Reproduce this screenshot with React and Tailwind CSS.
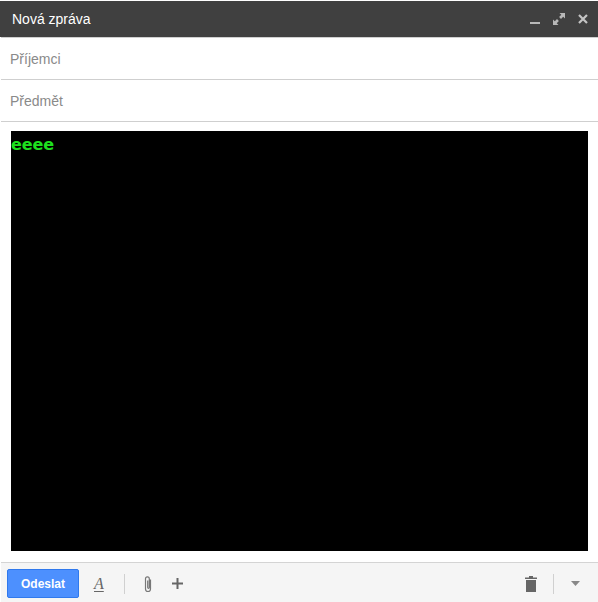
export default function App() {
  return (
    <div className="flex h-[602px] w-[598px] flex-col bg-white font-['Liberation_Sans',Arial,sans-serif]">
      <header className="mt-px flex h-[36px] shrink-0 items-center justify-between bg-[#404040] pl-3 pr-[10px]">
        <span className="text-[14px] text-white">Nová zpráva</span>
        <div className="flex items-center gap-[13px]">
          <svg width="10" height="10" viewBox="0 0 10 10" className="mt-[2px]">
            <rect x="0" y="7" width="10" height="2" fill="#b8b8b8" />
          </svg>
          <svg width="12" height="12" viewBox="0 0 12 12" fill="#b8b8b8">
            <path d="M6.500 0h5.500v5.500L10.200 3.700 8 5.900 6.100 4 8.300 1.800z" />
            <path d="M0 6.500L1.800 8.300 4 6.100 5.900 8 3.700 10.200 5.500 12H0z" />
          </svg>
          <svg width="10" height="10" viewBox="0 0 10 10" stroke="#c4c4c4" strokeWidth="2.2">
            <path d="M1 1l8 8M9 1l-8 8" />
          </svg>
        </div>
      </header>

      <div className="ml-px flex h-[43px] shrink-0 items-center border-y border-y-[#cfcfcf] pt-[2px] pl-[9px]">
        <span className="text-[14px] text-[#8a8a8a]">Příjemci</span>
      </div>
      <div className="ml-px flex h-[42px] shrink-0 items-center border-b border-b-[#cfcfcf] pt-[2px] pl-[9px]">
        <span className="text-[14px] text-[#8a8a8a]">Předmět</span>
      </div>

      <div className="flex-1 pt-[9px] pr-[10px] pb-[11px] pl-[11px]">
        <div className="h-full bg-black">
          <span className="block pt-[4px] font-['DejaVu_Sans',sans-serif] text-[16px] leading-[20px] font-bold tracking-[-0.1px] text-[#1ee01e]">
            eeee
          </span>
        </div>
      </div>

      <footer className="ml-px flex h-[40px] shrink-0 items-center border-t border-t-[#d4d4d4] bg-[#f5f5f5] pt-[2px] pr-[18px] pl-[6px]">
        <button className="h-[29px] w-[72px] rounded-[2px] border border-[#3079ed] bg-[#4d90fe] text-[12px] font-bold text-white">
          Odeslat
        </button>
        <span className="ml-[15px] font-['Liberation_Serif',serif] text-[16px] leading-[16px] text-[#666] italic underline underline-offset-2">
          A
        </span>
        <div className="ml-[20px] h-[20px] w-px bg-[#d0d0d0]" />
        <svg width="12" height="18" viewBox="0 0 12 18" fill="none" stroke="#777" strokeWidth="1.2" className="ml-[17px]">
          <path d="M8.500 4v9.500a2.500 2.500 0 0 1-5 0V3.200a1.900 1.900 0 0 1 3.800 0V12a.8.8 0 0 1-1.600 0V5" transform="translate(0 0.5)" />
        </svg>
        <svg width="11" height="11" viewBox="0 0 11 11" fill="#666" className="ml-[18px]">
          <path d="M4.500 0h2v4.500H11v2H6.500V11h-2V6.500H0v-2h4.500z" />
        </svg>
        <div className="ml-auto flex items-center">
          <svg width="12" height="16" viewBox="0 0 12 16" fill="#666">
            <path d="M4 0h4v1.500h4V3H0V1.500h4z" />
            <path d="M1 4h10v12H1z" />
          </svg>
          <div className="ml-[16px] h-[20px] w-px bg-[#d0d0d0]" />
          <svg width="9" height="5" viewBox="0 0 9 5" fill="#888" className="ml-[17px]">
            <path d="M0 0h9L4.500 5z" />
          </svg>
        </div>
      </footer>
    </div>
  );
}
